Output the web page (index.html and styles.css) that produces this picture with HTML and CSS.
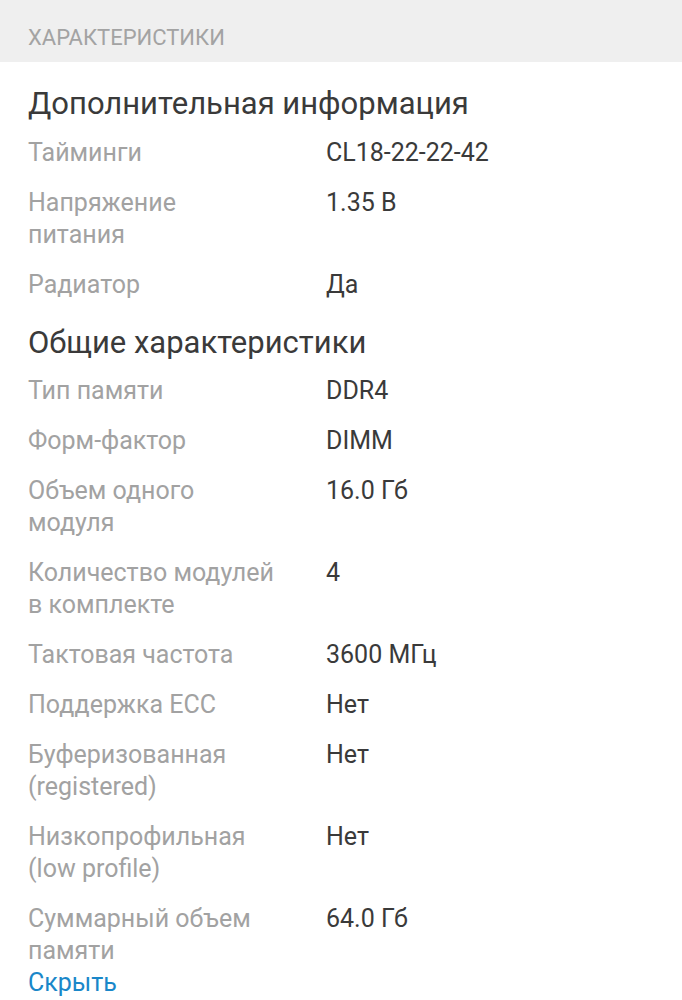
FILE: index.html
```html
<!DOCTYPE html>
<html lang="ru">
<head>
<meta charset="utf-8">
<link rel="stylesheet" href="styles.css">
</head>
<body>
<div class="topbar">ХАРАКТЕРИСТИКИ</div>
<div class="content">
  <h2 class="group">Дополнительная информация</h2>
  <div class="specs condensed">
    <div class="row"><div class="label">Тайминги</div><div class="value">CL18-22-22-42</div></div>
    <div class="row"><div class="label">Напряжение питания</div><div class="value">1.35 В</div></div>
    <div class="row"><div class="label">Радиатор</div><div class="value">Да</div></div>
  </div>
  <h2 class="group second">Общие характеристики</h2>
  <div class="specs">
    <div class="row"><div class="label">Тип памяти</div><div class="value">DDR4</div></div>
    <div class="row"><div class="label">Форм-фактор</div><div class="value">DIMM</div></div>
    <div class="row"><div class="label">Объем одного модуля</div><div class="value">16.0 Гб</div></div>
    <div class="row"><div class="label">Количество модулей в комплекте</div><div class="value">4</div></div>
    <div class="row"><div class="label">Тактовая частота</div><div class="value">3600 МГц</div></div>
    <div class="row"><div class="label">Поддержка ECC</div><div class="value">Нет</div></div>
    <div class="row"><div class="label">Буферизованная (registered)</div><div class="value">Нет</div></div>
    <div class="row"><div class="label">Низкопрофильная (low profile)</div><div class="value">Нет</div></div>
    <div class="row"><div class="label">Суммарный объем памяти</div><div class="value">64.0 Гб</div></div>
  </div>
  <a class="toggle" href="#">Скрыть</a>
</div>
</body>
</html>
```

FILE: styles.css
```css
html, body {
  margin: 0;
  padding: 0;
  background: #ffffff;
}
body {
  font-family: Roboto, "Noto Sans", sans-serif;
  color: #3a3a3a;
}
.topbar {
  height: 62px;
  box-sizing: border-box;
  padding: 13px 0 0 28px;
  background: #efefef;
  color: #a3a3a3;
  font-size: 22px;
  line-height: 49px;
}
.content {
  padding: 0 28px;
}
.group {
  margin: 0;
  font-weight: 400;
  font-size: 31px;
  line-height: 40px;
  color: #3a3a3a;
  padding-top: 22px;
  padding-bottom: 13px;
}
.group.second {
  padding-top: 22px;
  padding-bottom: 12px;
}
.specs {
  display: flex;
  flex-direction: column;
  gap: 18px;
}
.row {
  display: grid;
  grid-template-columns: 252px 1fr;
  column-gap: 46px;
  font-size: 25px;
  line-height: 32px;
}
.label {
  color: #a2a2a2;
}
.condensed .label {
  max-width: 220px;
}
.value {
  color: #3a3a3a;
}
.toggle {
  display: block;
  color: #1a87c9;
  text-decoration: none;
  font-size: 25px;
  line-height: 32px;
}
```
